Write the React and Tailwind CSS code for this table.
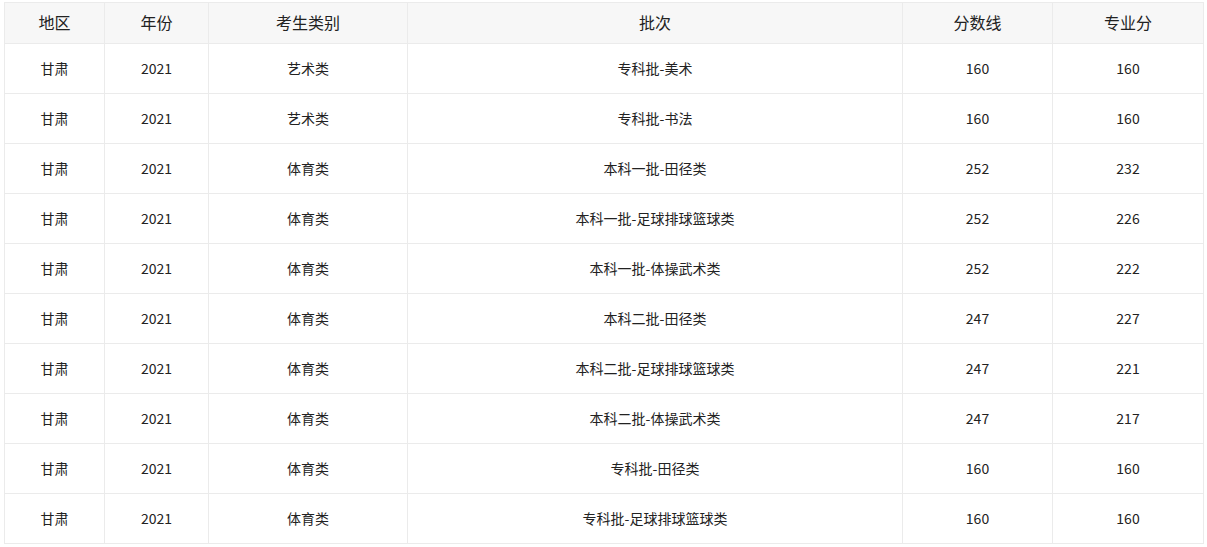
import React from "react";

const rows = [
  ["甘肃", "2021", "艺术类", "专科批-美术", "160", "160"],
  ["甘肃", "2021", "艺术类", "专科批-书法", "160", "160"],
  ["甘肃", "2021", "体育类", "本科一批-田径类", "252", "232"],
  ["甘肃", "2021", "体育类", "本科一批-足球排球篮球类", "252", "226"],
  ["甘肃", "2021", "体育类", "本科一批-体操武术类", "252", "222"],
  ["甘肃", "2021", "体育类", "本科二批-田径类", "247", "227"],
  ["甘肃", "2021", "体育类", "本科二批-足球排球篮球类", "247", "221"],
  ["甘肃", "2021", "体育类", "本科二批-体操武术类", "247", "217"],
  ["甘肃", "2021", "体育类", "专科批-田径类", "160", "160"],
  ["甘肃", "2021", "体育类", "专科批-足球排球篮球类", "160", "160"],
];

const heads = ["地区", "年份", "考生类别", "批次", "分数线", "专业分"];
const widths = ["w-[100px]", "w-[104px]", "w-[199px]", "w-[495px]", "w-[150px]", "w-[151px]"];

export default function App() {
  return (
    <div className="bg-white pl-[4px] pt-[2px] font-['Noto_Sans_CJK_SC','Noto_Sans',sans-serif] text-[#222]">
      <table className="table-fixed border-collapse w-[1200px]">
        <colgroup>
          {widths.map((w, i) => (
            <col key={i} className={w} />
          ))}
        </colgroup>
        <thead>
          <tr className="bg-[#f7f7f7] h-[41px]">
            {heads.map((h) => (
              <th key={h} className="border border-[#ebebeb] text-[16px] font-normal text-center p-0 pb-[2px] leading-none">
                {h}
              </th>
            ))}
          </tr>
        </thead>
        <tbody>
          {rows.map((r, i) => (
            <tr key={i} className="h-[50px]">
              {r.map((c, j) => (
                <td key={j} className="border border-[#ebebeb] text-[14px] text-center p-0 pb-[2px] leading-none">
                  {c}
                </td>
              ))}
            </tr>
          ))}
        </tbody>
      </table>
    </div>
  );
}
